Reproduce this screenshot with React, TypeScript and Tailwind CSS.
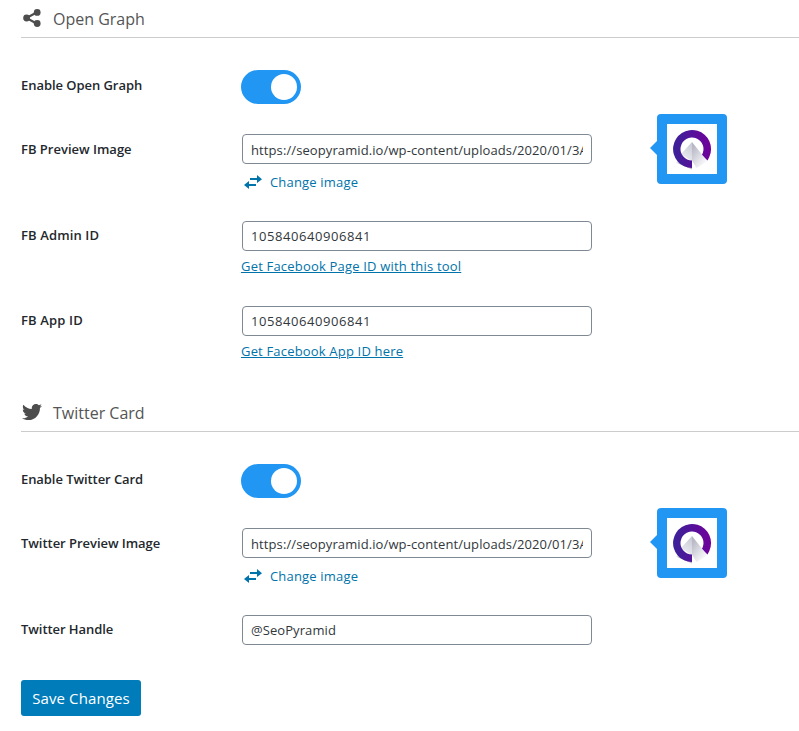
import type { ReactNode } from "react";
import { FaTwitter } from "react-icons/fa";

function SectionTitle({ icon, children }: { icon: ReactNode; children: ReactNode }) {
  return (
    <h2 className="flex h-[38px] items-center border-b border-[#ccc] text-[16px] text-[#555]">
      <span className="flex w-8 shrink-0 items-center pb-0.5 pl-px text-[#4d4d4d]">{icon}</span>
      <span>{children}</span>
    </h2>
  );
}

function Row({ label, className, labelClass = "leading-[30px]", children }: { label: string; className: string; labelClass?: string; children: ReactNode }) {
  return (
    <div className={`flex items-start ${className}`}>
      <div className={`w-[220px] shrink-0 text-[13px] font-semibold text-[#23282d] ${labelClass}`}>{label}</div>
      {children}
    </div>
  );
}

function Toggle() {
  return (
    <button className="flex h-[34px] w-[60px] items-center justify-end rounded-full bg-[#2196f3] pr-1">
      <span className="size-[26px] rounded-full bg-white" />
    </button>
  );
}

function Field({ value, className }: { value: string; className: string }) {
  return (
    <input
      readOnly
      value={value}
      className={`ml-px block h-[30px] w-[350px] rounded-[4px] border border-[#7e8993] bg-white px-2 text-[13px] text-[#32373c] ${className}`}
    />
  );
}

function SwapIcon() {
  return (
    <svg width="18" height="14" viewBox="0 0 18 14" fill="currentColor">
      <path d="M6 3h7V0l5 4.2L13 8V5H6z" />
      <path d="M12 9H5V6L0 10l5 4v-3h7z" />
    </svg>
  );
}

function Logo() {
  return (
    <svg width="50" height="50" viewBox="0 0 50 50">
      <defs>
        <linearGradient id="ring" x1="0" x2="1">
          <stop offset="0" stopColor="#3a2399" />
          <stop offset="1" stopColor="#70009b" />
        </linearGradient>
        <linearGradient id="left" x1="0.8" y1="0" x2="0.4" y2="1">
          <stop offset="0" stopColor="#c9c9d6" />
          <stop offset="1" stopColor="#ededf2" />
        </linearGradient>
        <linearGradient id="right" x1="0" y1="0.2" x2="0.6" y2="1">
          <stop offset="0" stopColor="#b6b6c4" />
          <stop offset="1" stopColor="#fafafc" />
        </linearGradient>
      </defs>
      <path d="M9 38.500l16 .5v6.500z" fill="#b9b9c8" />
      <path d="M25 18v19.500l-11-7.500z" fill="url(#left)" />
      <path d="M25 44A19 19 0 1 1 42.300 33L40.500 36.500L34.800 31A11.500 11.500 0 1 0 25 36.500z" fill="url(#ring)" />
      <path d="M25 18l15.500 19.500L29.500 44 25 36.500z" fill="url(#right)" />
    </svg>
  );
}

function Preview() {
  return (
    <div className="-mt-5 ml-[58px] flex items-center">
      <svg width="7" height="14" viewBox="0 0 7 14" className="-mt-0.5">
        <path d="M7 0v14L0 7z" fill="#2196f3" />
      </svg>
      <div className="size-[70px] rounded-[4px] bg-[#2196f3] p-2.5">
        <div className="size-[50px] bg-white">
          <Logo />
        </div>
      </div>
    </div>
  );
}

function ImageField() {
  return (
    <>
      <div>
        <Field value="https://seopyramid.io/wp-content/uploads/2020/01/3A-logo.png" className="pt-px tracking-[0.1px]" />
        <a className="mt-2 flex items-center pl-[3px] text-[13px] leading-5 tracking-[0.18px] text-[#0073aa]">
          <SwapIcon />
          <span className="ml-2">Change image</span>
        </a>
      </div>
      <Preview />
    </>
  );
}

function IdField({ link, tracking }: { link: string; tracking: string }) {
  return (
    <div>
      <Field value="105840640906841" className="pb-px tracking-[0.57px]" />
      <a className={`mt-[5px] block w-fit text-[13px] leading-5 text-[#0073aa] underline ${tracking}`}>{link}</a>
    </div>
  );
}

const ShareIcon = (
  <svg width="20" height="20" viewBox="0 0 20 20" fill="currentColor">
    <path d="M4.500 10L14.500 4.500M4.500 10l10 5.500" stroke="currentColor" strokeWidth="2" />
    <circle cx="4.600" cy="10" r="3.400" />
    <circle cx="15.200" cy="4.400" r="3.400" />
    <circle cx="15.200" cy="15.500" r="3.400" />
  </svg>
);

export default function App() {
  return (
    <main className="h-[731px] overflow-hidden bg-white pl-[21px] font-['Open_Sans',sans-serif]">
      <section className="h-[394px]">
        <SectionTitle icon={ShareIcon}>Open Graph</SectionTitle>
        <div className="pt-8">
          <Row label="Enable Open Graph" className="h-16" labelClass="leading-[30px] tracking-[-0.05px]">
            <Toggle />
          </Row>
          <Row label="FB Preview Image" className="h-[87px]">
            <ImageField />
          </Row>
          <Row label="FB Admin ID" className="h-[85px]" labelClass="leading-7 tracking-[0.12px]">
            <IdField link="Get Facebook Page ID with this tool" tracking="tracking-[0.19px]" />
          </Row>
          <Row label="FB App ID" className="h-[85px]" labelClass="leading-7 tracking-[0.15px]">
            <IdField link="Get Facebook App ID here" tracking="tracking-[0.18px]" />
          </Row>
        </div>
      </section>
      <section>
        <SectionTitle icon={<FaTwitter size={20} />}>Twitter Card</SectionTitle>
        <div className="pt-8">
          <Row label="Enable Twitter Card" className="h-16" labelClass="leading-[30px] tracking-[-0.07px]">
            <Toggle />
          </Row>
          <Row label="Twitter Preview Image" className="h-[87px]" labelClass="leading-[30px] tracking-[-0.04px]">
            <ImageField />
          </Row>
          <Row label="Twitter Handle" className="h-[65px]" labelClass="leading-7 tracking-[-0.06px]">
            <Field value="@SeoPyramid" className="pb-px tracking-[0.08px]" />
          </Row>
        </div>
      </section>
      <button className="flex h-9 w-[120px] items-center justify-center rounded-[3px] bg-[#007cba] text-[15px] tracking-[0.12px] text-white">
        Save Changes
      </button>
    </main>
  );
}
